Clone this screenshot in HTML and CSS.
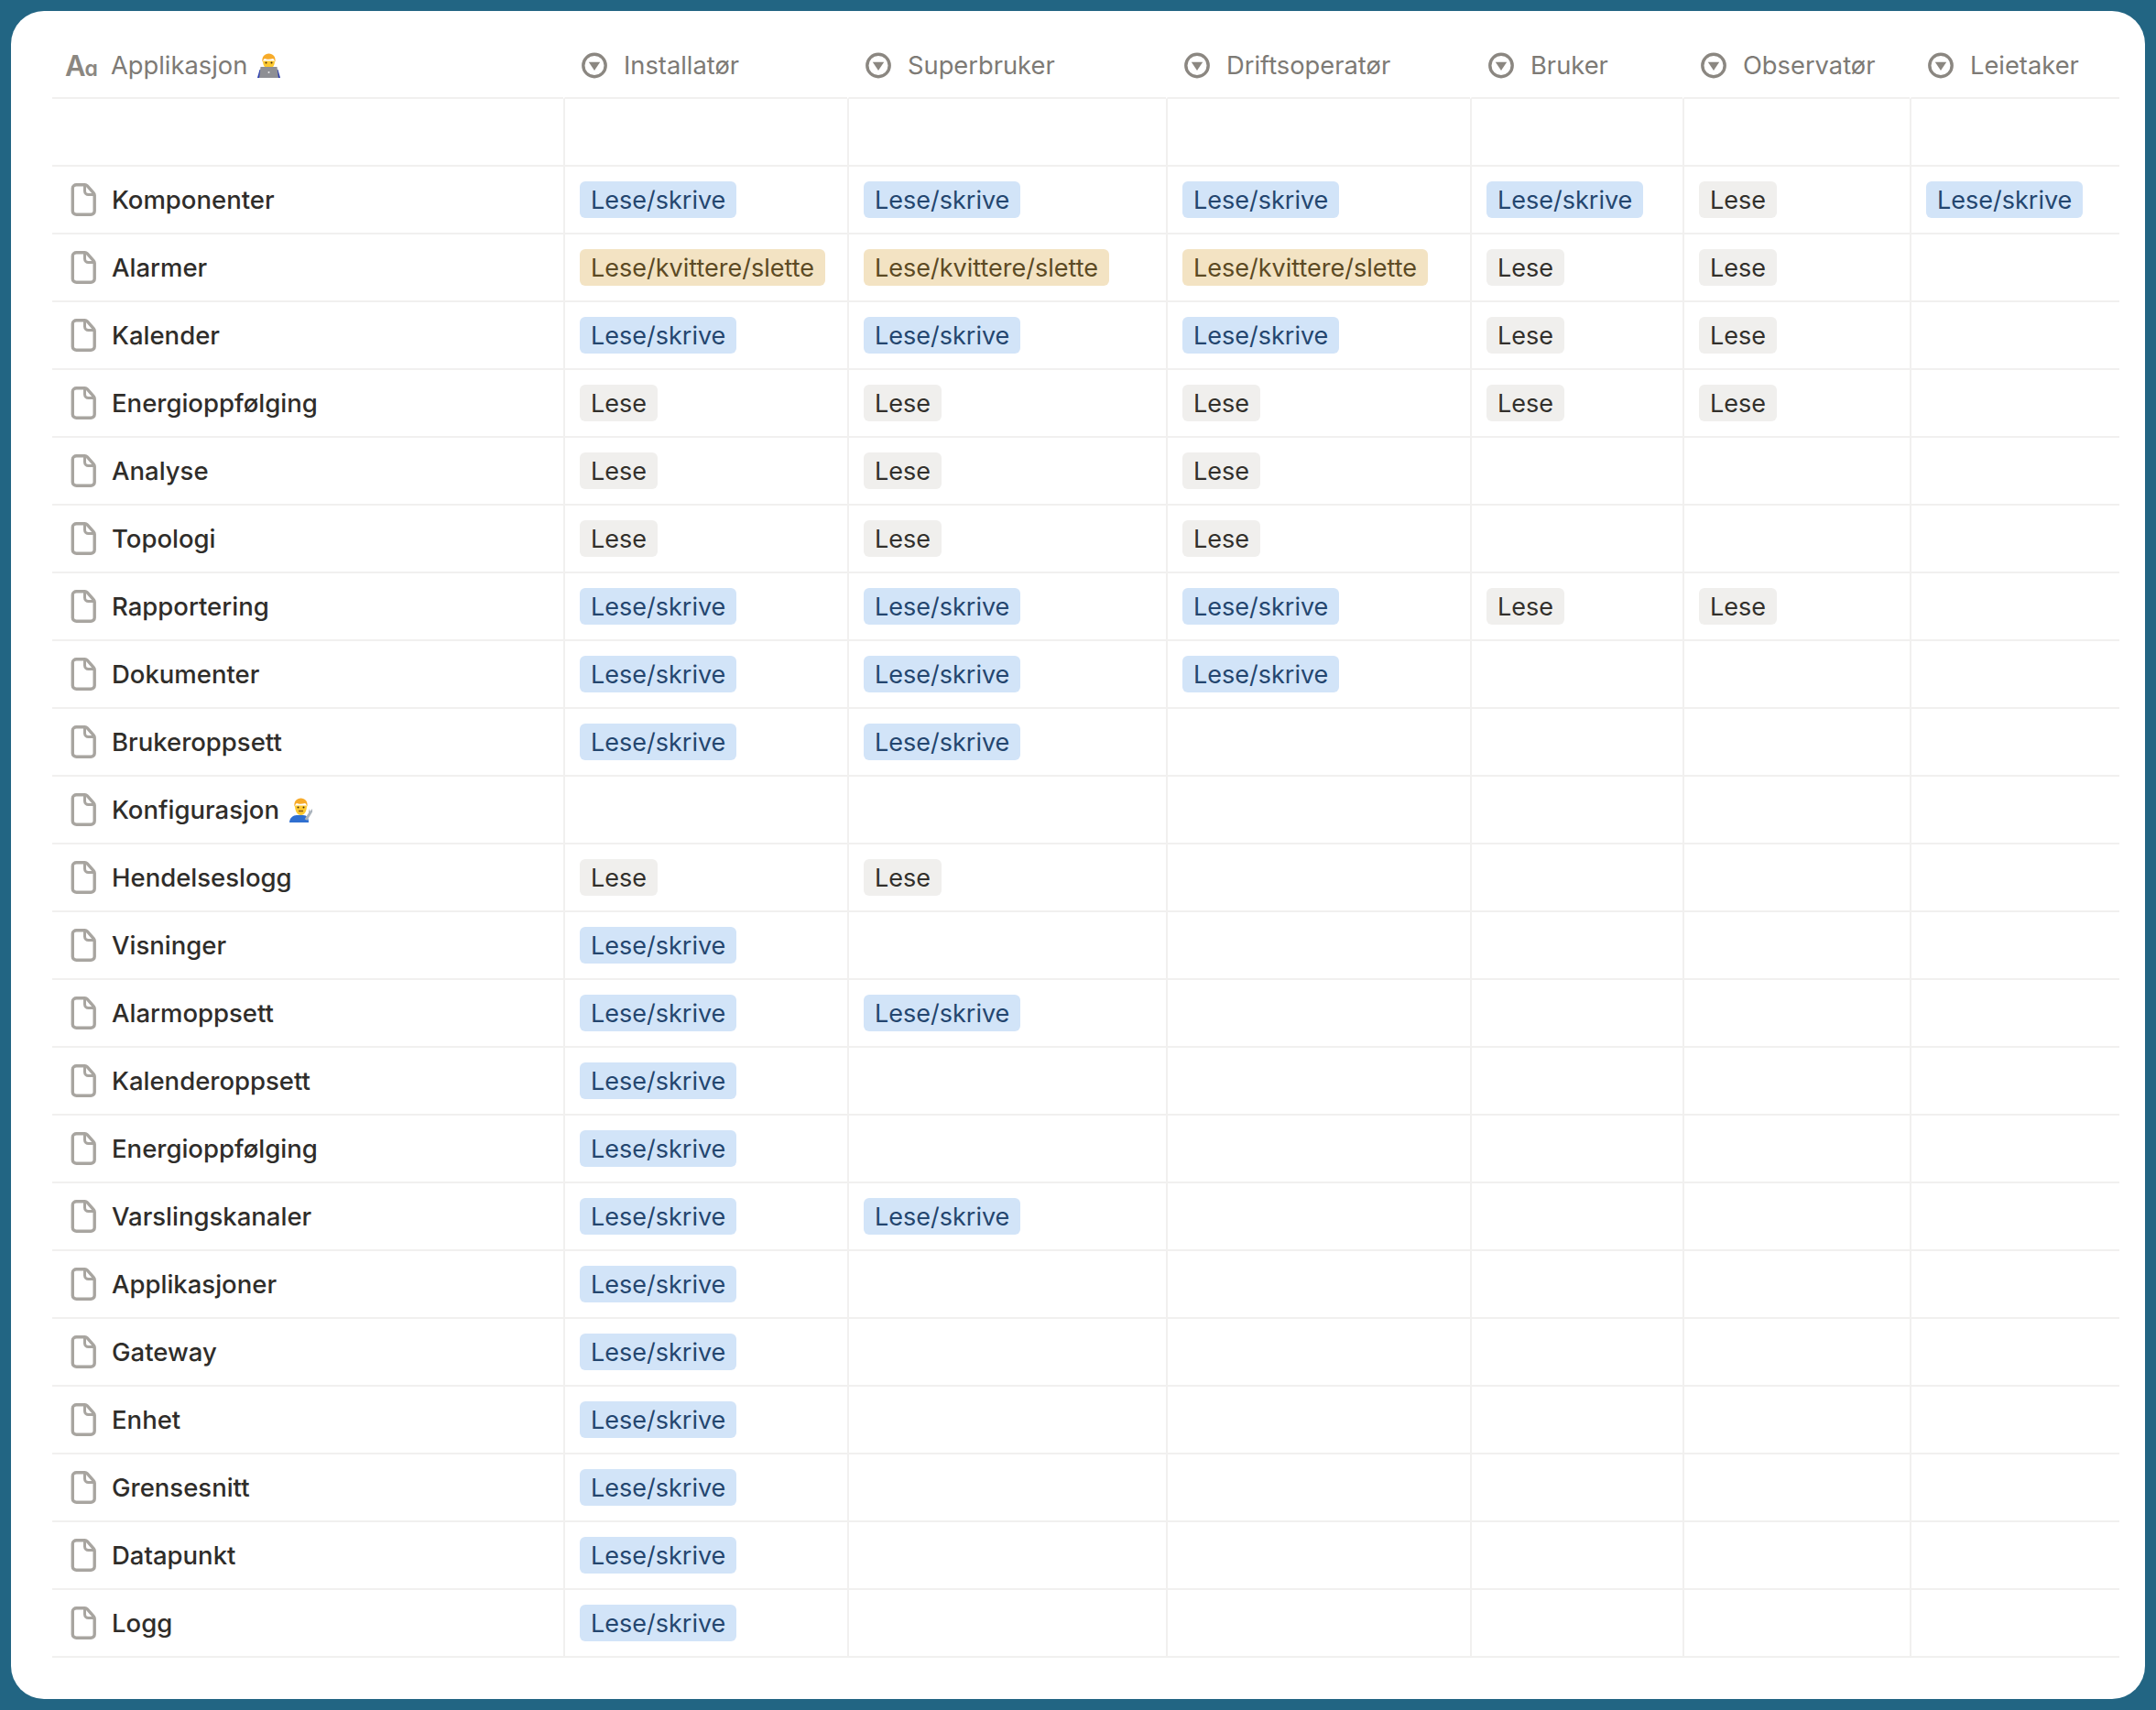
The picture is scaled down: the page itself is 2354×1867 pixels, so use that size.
FILE: index.html
```html
<!DOCTYPE html>
<html lang="nb">
<head>
    <meta charset="UTF-8">
    <title>Applikasjon</title>
    <link rel="stylesheet" href="styles.css">
</head>
<body>
    <svg class="sprites" width="0" height="0">
        <symbol id="doc" viewBox="0 0 28 36">
            <path d="M6.5 1.8h9.2c1 0 1.9.4 2.6 1.1l6.8 7.8c.6.7 1.1 1.6 1.1 2.6v17.2c0 2.4-2 3.7-4 3.700h-15.700c-2.200 0-4.200-1.300-4.200-3.700v-25c0-2.400 2-3.700 4.200-3.700z" fill="none" stroke="#a8a5a0" stroke-width="3.400"/>
            <path d="M15.500 2v6.500c0 2.200 1.800 4 4 4h6.500" fill="none" stroke="#a8a5a0" stroke-width="3"/>
        </symbol>
        <symbol id="select" viewBox="0 0 28 29">
            <circle cx="14" cy="14.500" r="12.200" fill="none" stroke="#8b8781" stroke-width="3.400"/>
            <path d="M7.800 10.800h12.400l-6.200 9.200z" fill="#8b8781"/>
        </symbol>
    </svg>

    <div class="card">
        <table class="roles">
            <colgroup>
                <col class="col-name">
                <col class="col-installer">
                <col class="col-super">
                <col class="col-operator">
                <col class="col-user">
                <col class="col-observer">
                <col class="col-tenant">
            </colgroup>
            <thead>
                <tr>
                    <th>
                        <div class="head-name">
                            <span class="title-icon">A<small>ɑ</small></span>
                            <span>Applikasjon</span>
                            <svg class="emoji" viewBox="0 0 27 27">
                                <path d="M1 27l2.500-9h20l2.500 9z" fill="#2c3fb0"/>
                                <path d="M7 8.500c0 5 2.500 8.500 6.500 8.500s6.500-3.500 6.500-8.500z" fill="#fdc92f"/>
                                <path d="M6.500 10c-1-6 2.500-9.500 7-9.500s8 3.500 7 9.500c-.5-2-1.500-3.500-2.500-4-3 1-7 1-9 0-1 .5-2 2-2.500 4z" fill="#f7ab2a"/>
                                <circle cx="10.500" cy="10.500" r="1" fill="#4a2f12"/>
                                <circle cx="16.500" cy="10.500" r="1" fill="#4a2f12"/>
                                <path d="M4.500 15h18l1.500 12h-21z" fill="#8e8f94"/>
                                <circle cx="13.500" cy="21" r="1" fill="#e6e6e8"/>
                            </svg>
                        </div>
                    </th>
                    <th><div class="head-cell"><svg class="head-icon"><use href="#select"/></svg>Installatør</div></th>
                    <th><div class="head-cell"><svg class="head-icon"><use href="#select"/></svg>Superbruker</div></th>
                    <th><div class="head-cell"><svg class="head-icon"><use href="#select"/></svg>Driftsoperatør</div></th>
                    <th><div class="head-cell"><svg class="head-icon"><use href="#select"/></svg>Bruker</div></th>
                    <th><div class="head-cell"><svg class="head-icon"><use href="#select"/></svg>Observatør</div></th>
                    <th><div class="head-cell"><svg class="head-icon"><use href="#select"/></svg>Leietaker</div></th>
                </tr>
            </thead>
            <tbody>
                <tr><td></td><td></td><td></td><td></td><td></td><td></td><td></td></tr>
                <tr>
                    <td><div class="name"><svg class="doc"><use href="#doc"/></svg>Komponenter</div></td>
                    <td><span class="tag blue">Lese/skrive</span></td>
                    <td><span class="tag blue">Lese/skrive</span></td>
                    <td><span class="tag blue">Lese/skrive</span></td>
                    <td><span class="tag blue">Lese/skrive</span></td>
                    <td><span class="tag grey">Lese</span></td>
                    <td><span class="tag blue">Lese/skrive</span></td>
                </tr>
                <tr>
                    <td><div class="name"><svg class="doc"><use href="#doc"/></svg>Alarmer</div></td>
                    <td><span class="tag amber">Lese/kvittere/slette</span></td>
                    <td><span class="tag amber">Lese/kvittere/slette</span></td>
                    <td><span class="tag amber">Lese/kvittere/slette</span></td>
                    <td><span class="tag grey">Lese</span></td>
                    <td><span class="tag grey">Lese</span></td>
                    <td></td>
                </tr>
                <tr>
                    <td><div class="name"><svg class="doc"><use href="#doc"/></svg>Kalender</div></td>
                    <td><span class="tag blue">Lese/skrive</span></td>
                    <td><span class="tag blue">Lese/skrive</span></td>
                    <td><span class="tag blue">Lese/skrive</span></td>
                    <td><span class="tag grey">Lese</span></td>
                    <td><span class="tag grey">Lese</span></td>
                    <td></td>
                </tr>
                <tr>
                    <td><div class="name"><svg class="doc"><use href="#doc"/></svg>Energioppfølging</div></td>
                    <td><span class="tag grey">Lese</span></td>
                    <td><span class="tag grey">Lese</span></td>
                    <td><span class="tag grey">Lese</span></td>
                    <td><span class="tag grey">Lese</span></td>
                    <td><span class="tag grey">Lese</span></td>
                    <td></td>
                </tr>
                <tr>
                    <td><div class="name"><svg class="doc"><use href="#doc"/></svg>Analyse</div></td>
                    <td><span class="tag grey">Lese</span></td>
                    <td><span class="tag grey">Lese</span></td>
                    <td><span class="tag grey">Lese</span></td>
                    <td></td><td></td><td></td>
                </tr>
                <tr>
                    <td><div class="name"><svg class="doc"><use href="#doc"/></svg>Topologi</div></td>
                    <td><span class="tag grey">Lese</span></td>
                    <td><span class="tag grey">Lese</span></td>
                    <td><span class="tag grey">Lese</span></td>
                    <td></td><td></td><td></td>
                </tr>
                <tr>
                    <td><div class="name"><svg class="doc"><use href="#doc"/></svg>Rapportering</div></td>
                    <td><span class="tag blue">Lese/skrive</span></td>
                    <td><span class="tag blue">Lese/skrive</span></td>
                    <td><span class="tag blue">Lese/skrive</span></td>
                    <td><span class="tag grey">Lese</span></td>
                    <td><span class="tag grey">Lese</span></td>
                    <td></td>
                </tr>
                <tr>
                    <td><div class="name"><svg class="doc"><use href="#doc"/></svg>Dokumenter</div></td>
                    <td><span class="tag blue">Lese/skrive</span></td>
                    <td><span class="tag blue">Lese/skrive</span></td>
                    <td><span class="tag blue">Lese/skrive</span></td>
                    <td></td><td></td><td></td>
                </tr>
                <tr>
                    <td><div class="name"><svg class="doc"><use href="#doc"/></svg>Brukeroppsett</div></td>
                    <td><span class="tag blue">Lese/skrive</span></td>
                    <td><span class="tag blue">Lese/skrive</span></td>
                    <td></td><td></td><td></td><td></td>
                </tr>
                <tr>
                    <td>
                        <div class="name"><svg class="doc"><use href="#doc"/></svg>Konfigurasjon
                            <svg class="emoji" viewBox="0 0 27 27">
                                <path d="M1 27c0-5 4-8 8-8h7c4 0 6 3 6 8z" fill="#2f6fd0"/>
                                <path d="M7 8.500c0 6 2.500 10.500 6.500 10.500s6.500-4.500 6.500-10.500z" fill="#fdc92f"/>
                                <path d="M6.500 10c-1-6 2.500-9.500 7-9.500s8 3.500 7 9.500c-.5-2-1.500-3.500-2.500-4-3 1-7 1-9 0-1 .5-2 2-2.500 4z" fill="#f7ab2a"/>
                                <circle cx="10.500" cy="10.500" r="1" fill="#4a2f12"/>
                                <circle cx="16.500" cy="10.500" r="1" fill="#4a2f12"/>
                                <path d="M11 14.500h5" stroke="#8a5a1a" stroke-width="1.500"/>
                                <path d="M19 24l5-8" stroke="#aab3bd" stroke-width="3"/>
                                <path d="M22 15l1-3 .5 3 2.500-3v4l-3 2z" fill="#aab3bd"/>
                            </svg>
                        </div>
                    </td>
                    <td></td><td></td><td></td><td></td><td></td><td></td>
                </tr>
                <tr>
                    <td><div class="name"><svg class="doc"><use href="#doc"/></svg>Hendelseslogg</div></td>
                    <td><span class="tag grey">Lese</span></td>
                    <td><span class="tag grey">Lese</span></td>
                    <td></td><td></td><td></td><td></td>
                </tr>
                <tr>
                    <td><div class="name"><svg class="doc"><use href="#doc"/></svg>Visninger</div></td>
                    <td><span class="tag blue">Lese/skrive</span></td>
                    <td></td><td></td><td></td><td></td><td></td>
                </tr>
                <tr>
                    <td><div class="name"><svg class="doc"><use href="#doc"/></svg>Alarmoppsett</div></td>
                    <td><span class="tag blue">Lese/skrive</span></td>
                    <td><span class="tag blue">Lese/skrive</span></td>
                    <td></td><td></td><td></td><td></td>
                </tr>
                <tr>
                    <td><div class="name"><svg class="doc"><use href="#doc"/></svg>Kalenderoppsett</div></td>
                    <td><span class="tag blue">Lese/skrive</span></td>
                    <td></td><td></td><td></td><td></td><td></td>
                </tr>
                <tr>
                    <td><div class="name"><svg class="doc"><use href="#doc"/></svg>Energioppfølging</div></td>
                    <td><span class="tag blue">Lese/skrive</span></td>
                    <td></td><td></td><td></td><td></td><td></td>
                </tr>
                <tr>
                    <td><div class="name"><svg class="doc"><use href="#doc"/></svg>Varslingskanaler</div></td>
                    <td><span class="tag blue">Lese/skrive</span></td>
                    <td><span class="tag blue">Lese/skrive</span></td>
                    <td></td><td></td><td></td><td></td>
                </tr>
                <tr>
                    <td><div class="name"><svg class="doc"><use href="#doc"/></svg>Applikasjoner</div></td>
                    <td><span class="tag blue">Lese/skrive</span></td>
                    <td></td><td></td><td></td><td></td><td></td>
                </tr>
                <tr>
                    <td><div class="name"><svg class="doc"><use href="#doc"/></svg>Gateway</div></td>
                    <td><span class="tag blue">Lese/skrive</span></td>
                    <td></td><td></td><td></td><td></td><td></td>
                </tr>
                <tr>
                    <td><div class="name"><svg class="doc"><use href="#doc"/></svg>Enhet</div></td>
                    <td><span class="tag blue">Lese/skrive</span></td>
                    <td></td><td></td><td></td><td></td><td></td>
                </tr>
                <tr>
                    <td><div class="name"><svg class="doc"><use href="#doc"/></svg>Grensesnitt</div></td>
                    <td><span class="tag blue">Lese/skrive</span></td>
                    <td></td><td></td><td></td><td></td><td></td>
                </tr>
                <tr>
                    <td><div class="name"><svg class="doc"><use href="#doc"/></svg>Datapunkt</div></td>
                    <td><span class="tag blue">Lese/skrive</span></td>
                    <td></td><td></td><td></td><td></td><td></td>
                </tr>
                <tr>
                    <td><div class="name"><svg class="doc"><use href="#doc"/></svg>Logg</div></td>
                    <td><span class="tag blue">Lese/skrive</span></td>
                    <td></td><td></td><td></td><td></td><td></td>
                </tr>
            </tbody>
        </table>
    </div>
</body>
</html>
```

FILE: styles.css
```css
body {
    margin: 0;
    padding: 12px;
    background-color: #226583;
    font-family: Inter, "Noto Sans", sans-serif;
    font-size: 27.5px;
    color: #2f2d2a;
}
.sprites {
    position: absolute;
}
.card {
    background-color: #fff;
    border-radius: 36px;
    padding: 22px 28px 45px 45px;
}
.roles {
    table-layout: fixed;
    width: 2257px;
    border-collapse: separate;
    border-spacing: 0;
}
.col-name { width: 558px; }
.col-installer { width: 310px; }
.col-super { width: 348px; }
.col-operator { width: 332px; }
.col-user { width: 232px; }
.col-observer { width: 248px; }
.col-tenant { width: 229px; }

.roles th,
.roles td {
    box-sizing: border-box;
    height: 74px;
    padding: 0 0 0 16px;
    border-bottom: 2px solid #f1f0ef;
    text-align: left;
    white-space: nowrap;
}
.roles td + td {
    border-left: 2px solid #f1f0ef;
}
.roles th + th {
    border-left: 2px solid transparent;
}
.roles th {
    padding-top: 3px;
    font-weight: 400;
    font-size: 27.3px;
    color: #7d7a75;
}
.head-cell {
    display: flex;
    align-items: center;
    gap: 18px;
    padding-left: 2px;
}
.head-icon {
    width: 28px;
    height: 29px;
    flex: none;
}
.head-name {
    display: flex;
    align-items: center;
    gap: 10px;
}
.title-icon {
    width: 40px;
    margin-left: -2px;
    font-weight: 600;
    color: #8b8781;
    font-size: 31px;
    letter-spacing: -1px;
}
.title-icon small {
    font-size: 23px;
}
.name {
    display: flex;
    align-items: center;
    padding-left: 4px;
    font-weight: 500;
}
.doc {
    width: 28px;
    height: 36px;
    flex: none;
    margin-right: 17px;
}
.emoji {
    width: 27px;
    height: 27px;
    flex: none;
}
.name .emoji {
    margin-left: 10px;
}
.tag {
    display: inline-block;
    box-sizing: border-box;
    height: 40px;
    line-height: 40px;
    padding: 1px 12px 0;
    border-radius: 6px;
    font-size: 27px;
    vertical-align: middle;
}
.blue {
    background-color: #d2e4f8;
    color: #24466f;
}
.amber {
    background-color: #f3e3c3;
    color: #5c4a24;
}
.grey {
    background-color: #f0efed;
    color: #32302c;
}
```
